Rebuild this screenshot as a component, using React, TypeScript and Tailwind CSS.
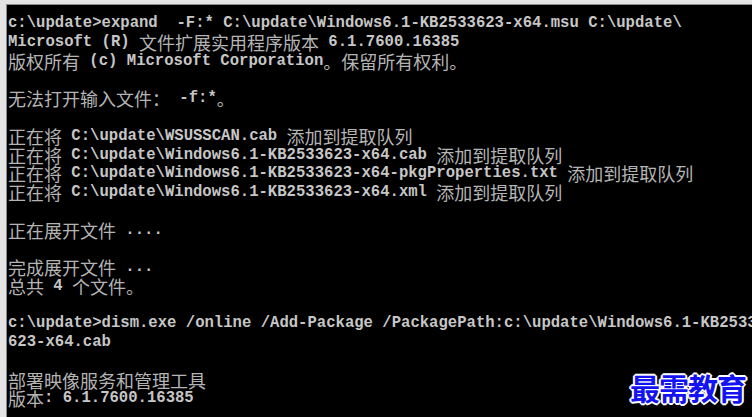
const lines: string[] = [
  "c:\\update>expand  -F:* C:\\update\\Windows6.1-KB2533623-x64.msu C:\\update\\",
  "Microsoft (R) 文件扩展实用程序版本 6.1.7600.16385",
  "版权所有 (c) Microsoft Corporation。保留所有权利。",
  "",
  "无法打开输入文件： -f:*。",
  "",
  "正在将 C:\\update\\WSUSSCAN.cab 添加到提取队列",
  "正在将 C:\\update\\Windows6.1-KB2533623-x64.cab 添加到提取队列",
  "正在将 C:\\update\\Windows6.1-KB2533623-x64-pkgProperties.txt 添加到提取队列",
  "正在将 C:\\update\\Windows6.1-KB2533623-x64.xml 添加到提取队列",
  "",
  "正在展开文件 ....",
  "",
  "完成展开文件 ...",
  "总共 4 个文件。",
  "",
  "c:\\update>dism.exe /online /Add-Package /PackagePath:c:\\update\\Windows6.1-KB2533",
  "623-x64.cab",
  "",
  "部署映像服务和管理工具",
  "版本: 6.1.7600.16385",
];

// split a line into ascii / cjk runs so the wide glyphs get their own size
function Segs({ text }: { text: string }) {
  const parts = text.match(/[\u3000-\u9fff\uff00-\uffef]+|[^\u3000-\u9fff\uff00-\uffef]+/g) || [];
  return (
    <>
      {parts.map((p, i) =>
        /[\u3000-\u9fff\uff00-\uffef]/.test(p) ? (
          <span
            key={i}
            className="text-[18px] leading-[18px] font-normal text-[#b4b4b4] [font-family:'Noto_Sans_CJK_SC',sans-serif]"
          >
            {p}
          </span>
        ) : (
          <span key={i} className="leading-[18px]">{p}</span>
        )
      )}
    </>
  );
}

export default function App() {
  return (
    <div className="w-[752px] h-[417px] overflow-hidden bg-[#e4e4e4] pl-[6px] pt-[4px]">
      <div className="relative h-full border-l border-t border-[#8c8c8c] bg-black pl-[1px] pt-[9px] overflow-hidden">
        <div className="font-['Liberation_Mono',monospace] font-bold text-[15.6px] text-[#c6c6c6] leading-[18.75px] whitespace-pre">
          {lines.map((l, i) => (
            <div key={i} className="h-[18.75px] flex items-center">
              <Segs text={l} />
            </div>
          ))}
        </div>
        <div className="absolute right-[6px] bottom-[15px] text-[30px] leading-none font-bold tracking-[-1px] text-[#1414f0] [font-family:'Noto_Sans_CJK_SC',sans-serif] [text-shadow:0_0_2px_#fff,0_0_2px_#fff,1px_1px_0_#fff,-1px_-1px_0_#fff,1px_-1px_0_#fff,-1px_1px_0_#fff,2px_0_0_#fff,-2px_0_0_#fff,0_2px_0_#fff,0_-2px_0_#fff]">
          最需教育
        </div>
      </div>
    </div>
  );
}
